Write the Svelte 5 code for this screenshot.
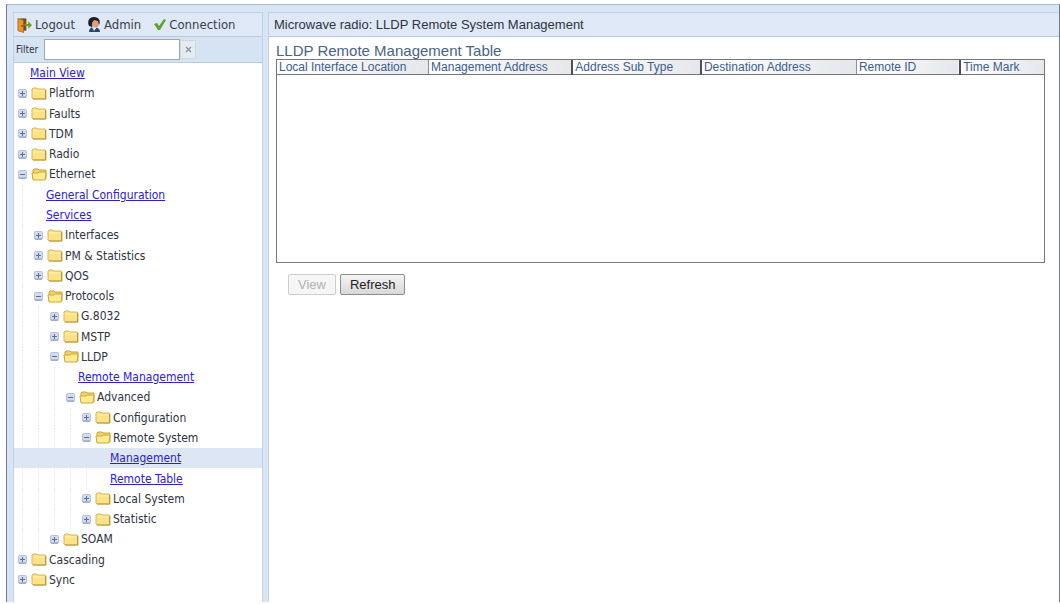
<script>
  let filter = $state('');
  let selected = $state('Management');

  // kind: link | closed | open
  const nodes = [
    { level: 0, kind: 'link', label: 'Main View' },
    { level: 0, kind: 'closed', label: 'Platform' },
    { level: 0, kind: 'closed', label: 'Faults' },
    { level: 0, kind: 'closed', label: 'TDM' },
    { level: 0, kind: 'closed', label: 'Radio' },
    { level: 0, kind: 'open', label: 'Ethernet' },
    { level: 1, kind: 'link', label: 'General Configuration' },
    { level: 1, kind: 'link', label: 'Services' },
    { level: 1, kind: 'closed', label: 'Interfaces' },
    { level: 1, kind: 'closed', label: 'PM & Statistics' },
    { level: 1, kind: 'closed', label: 'QOS' },
    { level: 1, kind: 'open', label: 'Protocols' },
    { level: 2, kind: 'closed', label: 'G.8032' },
    { level: 2, kind: 'closed', label: 'MSTP' },
    { level: 2, kind: 'open', label: 'LLDP' },
    { level: 3, kind: 'link', label: 'Remote Management' },
    { level: 3, kind: 'open', label: 'Advanced' },
    { level: 4, kind: 'closed', label: 'Configuration' },
    { level: 4, kind: 'open', label: 'Remote System' },
    { level: 5, kind: 'link', label: 'Management' },
    { level: 5, kind: 'link', label: 'Remote Table' },
    { level: 4, kind: 'closed', label: 'Local System' },
    { level: 4, kind: 'closed', label: 'Statistic' },
    { level: 2, kind: 'closed', label: 'SOAM' },
    { level: 0, kind: 'closed', label: 'Cascading' },
    { level: 0, kind: 'closed', label: 'Sync' }
  ];

  const columns = [
    { name: 'Local Interface Location', width: 153 },
    { name: 'Management Address', width: 144 },
    { name: 'Address Sub Type', width: 128 },
    { name: 'Destination Address', width: 156 },
    { name: 'Remote ID', width: 103 },
    { name: 'Time Mark', width: 83 }
  ];
  const total = columns.reduce((sum, c) => sum + c.width, 0);

  let visible = $derived(
    nodes.filter((n) => n.label.toLowerCase().includes(filter.toLowerCase()))
  );

  function select(event, label) {
    event.preventDefault();
    selected = label;
  }
</script>

<div class="frame">
  <aside>
    <div class="toolbar">
      <button class="tool">
        <svg width="15" height="16" viewBox="0 0 16 16">
          <path d="M3 1h7v13H3z" fill="#7a4a1c" />
          <path d="M1 1l6 2v13l-6-2z" fill="#e8962e" stroke="#a85c14" stroke-width=".8" />
          <circle cx="5.5" cy="9" r=".9" fill="#6b3a0c" />
          <path d="M8 7h4V4l4 4-4 4V9H8z" fill="#6f9a2c" />
        </svg>
        Logout
      </button>
      <button class="tool">
        <svg width="14" height="16" viewBox="0 0 14 16">
          <path d="M2 15c0-3 2-5 5-5s6 2 6 5z" fill="#2c4674" />
          <path d="M5 10l2 4 3-4z" fill="#e4ecf6" />
          <circle cx="8" cy="6.500" r="4" fill="#dba27c" />
          <path d="M2 9C0 4 2 0 7 0c5 0 7 4 5 8l-1-4-4-1-2 3v4z" fill="#1d1d26" />
        </svg>
        Admin
      </button>
      <button class="tool">
        <svg width="13" height="13" viewBox="0 0 13 13">
          <path d="M1 6l3-1 2 3 5-7 2 1-6 10H5z" fill="#5da32c" />
        </svg>
        Connection
      </button>
    </div>

    <div class="filter">
      <label for="filter">Filter</label>
      <input id="filter" type="text" autocomplete="off" bind:value={filter} />
      <button class="clear" aria-label="Clear filter" onclick={() => (filter = '')}>
        <svg width="7" height="7" viewBox="0 0 7 7">
          <path d="M1 1l5 5M6 1L1 6" stroke="#8a94a2" stroke-width="1.4" />
        </svg>
      </button>
    </div>

    <ul class="tree">
      {#each visible as node}
        <li class:selected={node.label === selected}>
          {#each { length: node.level } as _}
            <span class="guide"></span>
          {/each}
          {#if node.kind === 'link'}
            <a href="#{node.label}" onclick={(e) => select(e, node.label)}>{node.label}</a>
          {:else}
            <button class="toggle" aria-label="Toggle {node.label}">
              <svg width="9" height="9" viewBox="0 0 9 9">
                <rect x=".5" y=".5" width="8" height="8" rx="1" fill="#d3dcec" stroke="#b4c0d6" />
                <path d="M1 8h7" stroke="#8799ba" />
                <path d={node.kind === 'open' ? 'M2 4.5h5' : 'M2 4.5h5M4.5 2v5'} stroke="#5a6d92" />
              </svg>
            </button>
            <svg class="folder" width="16" height="13" viewBox="0 0 16 13">
              {#if node.kind === 'open'}
                <path d="M2 11V2l1-1h4l1 1h7v9z" fill="#f1d468" stroke="#c9a23c" />
                <path d="M1 5h6l1-1h7l-1 8H2z" fill="#ffec8c" stroke="#cfa83c" />
              {:else}
                <path d="M1 11V2l1-1h4l1 1h7l1 1v9H2z" fill="#fbe285" stroke="#d8b75c" />
                <path d="M2 4h11" stroke="#fff3b4" />
                <path d="M2 12h12.500V3" fill="none" stroke="#bb9440" />
              {/if}
            </svg>
            <span>{node.label}</span>
          {/if}
        </li>
      {/each}
    </ul>
  </aside>

  <main>
    <h1>Microwave radio: LLDP Remote System Management</h1>
    <section>
      <h2 id="table-title">LLDP Remote Management Table</h2>
      <div class="grid">
        <table aria-labelledby="table-title">
          <thead>
            <tr>
              {#each columns as col}
                <th style="width: {(col.width / total) * 100}%">{col.name}</th>
              {/each}
            </tr>
          </thead>
          <tbody></tbody>
        </table>
      </div>
      <div class="actions">
        <button disabled>View</button>
        <button>Refresh</button>
      </div>
    </section>
  </main>
</div>

<style>
  :global(body) {
    margin: 0;
    background: #fff;
  }

  .frame {
    box-sizing: border-box;
    display: flex;
    gap: 5px;
    min-height: calc(100vh - 6px);
    margin: 4px 0 2px 6px;
    padding: 7px 0 0 6px;
    border: 1px solid #6f7a8a;
    border-top-color: #a9bccb;
    border-bottom: 0;
    background: #d8e5f5;
    font-family: 'Liberation Sans', Arial, sans-serif;
    color: #2e3440;
  }

  button {
    font-family: inherit;
    cursor: pointer;
  }

  aside {
    box-sizing: border-box;
    display: flex;
    flex-direction: column;
    flex: 0 0 250px;
    border: 1px solid #c5d2e6;
    border-bottom: 0;
    background: #fff;
    font-family: 'DejaVu Sans Condensed', 'DejaVu Sans', Tahoma, sans-serif;
  }

  .toolbar {
    display: flex;
    align-items: center;
    gap: 12px;
    height: 23px;
    padding-left: 3px;
    border-bottom: 1px solid #b8cce0;
    background: #dfe8f6;
  }

  .tool {
    display: flex;
    align-items: center;
    gap: 3px;
    padding: 0;
    border: 0;
    background: none;
    font-size: 13px;
    color: #3a3f4a;
  }

  .filter {
    display: flex;
    align-items: center;
    height: 25px;
    padding-left: 2px;
    border-bottom: 1px solid #b8cce0;
    background: #d5e3f2;
  }

  .filter label {
    width: 28px;
    font-size: 10px;
  }

  .filter input {
    box-sizing: border-box;
    width: 136px;
    height: 21px;
    padding: 0 3px;
    border: 1px solid #9aa8ba;
    background: #fff;
    font-size: 11px;
  }

  .clear {
    display: flex;
    align-items: center;
    justify-content: center;
    width: 16px;
    height: 19px;
    padding: 0;
    border: 1px solid #cfd8e4;
    background: #e6ebf2;
  }

  .tree {
    display: grid;
    grid-auto-rows: minmax(20px, 1fr);
    flex: 1;
    margin: 0;
    padding: 0 0 12px;
    list-style: none;
    font-size: 12px;
  }

  .tree li {
    display: flex;
    align-items: center;
    padding-left: 4px;
    white-space: nowrap;
  }

  .tree li.selected {
    background: #dde6f5;
  }

  .guide {
    box-sizing: border-box;
    align-self: stretch;
    width: 12px;
    margin-left: 4px;
    border-left: 1px dotted #e2e5ea;
  }

  .tree a {
    margin-left: 12px;
    color: #2a22d0;
  }

  .toggle {
    display: flex;
    padding: 0;
    border: 0;
    background: none;
  }

  .folder {
    margin: 0 2px 0 4px;
  }

  main {
    flex: 1;
    min-width: 0;
    border: 1px solid #c5d2e6;
    border-width: 1px 0 0 1px;
    background: #fff;
  }

  h1 {
    margin: 0;
    padding-left: 5px;
    border-bottom: 1px solid #b8cce0;
    background: #dfe8f6;
    font-size: 13px;
    font-weight: 400;
    line-height: 23px;
  }

  section {
    padding: 5px 14px 0 7px;
  }

  h2 {
    margin: 0;
    font-size: 15px;
    font-weight: 400;
    line-height: 17px;
    color: #4a6285;
  }

  .grid {
    min-height: 202px;
    border: 1px solid #777;
  }

  table {
    width: 100%;
    border-collapse: collapse;
    table-layout: fixed;
  }

  th {
    padding: 0 0 0 2px;
    border-bottom: 1px solid #777;
    border-left: 2px solid #4b5058;
    background: linear-gradient(90deg, #fff, #e4e7eb);
    font-size: 12px;
    font-weight: 400;
    line-height: 14px;
    text-align: left;
    white-space: nowrap;
    color: #3d5d8c;
  }

  th:first-child {
    border-left: 0;
  }

  th:nth-child(2),
  th:nth-child(5) {
    border-left: 1px solid #8a9099;
  }

  .actions {
    display: flex;
    gap: 4px;
    padding: 11px 12px;
  }

  .actions button {
    height: 21px;
    padding: 0 9px;
    border: 1px solid #8c8c8c;
    border-radius: 2px;
    background: linear-gradient(#f4f4f4, #d8d8d8);
    font-size: 13px;
    color: #222;
  }

  .actions button:disabled {
    border-color: #cfcfcf;
    background: #f6f6f6;
    color: #b0b0b0;
    cursor: default;
  }
</style>
